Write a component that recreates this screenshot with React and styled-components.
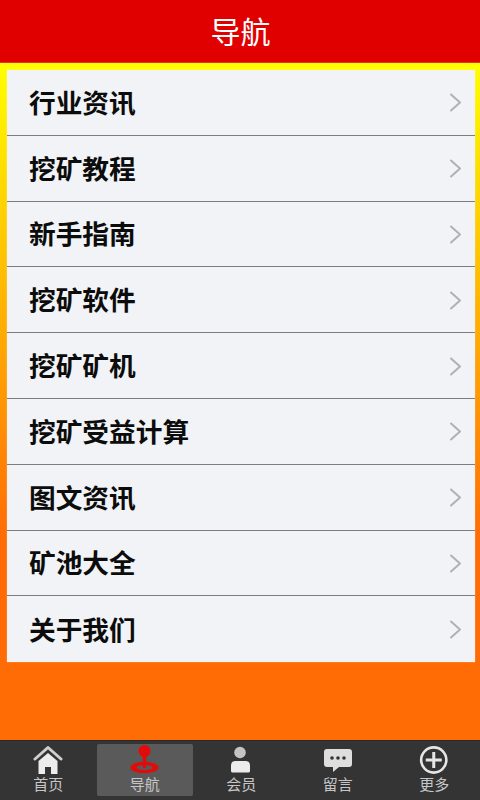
import React from "react";
import styled, { createGlobalStyle } from "styled-components";

const Global = createGlobalStyle`
  html, body { margin: 0; padding: 0; height: 100%; }
  body { font-family: "Liberation Sans", "Noto Sans CJK SC", sans-serif; }
`;
const Page = styled.div`
  width: 480px; height: 800px; display: flex; flex-direction: column; overflow: hidden;
`;
const Header = styled.header`
  height: 63px; flex: none; background: #e00000; color: #fff;
  display: flex; align-items: center; justify-content: center;
  font-size: 30px; border-bottom: 1px solid #e4302a; box-sizing: border-box; padding: 0 0 2px 1px;
`;
const Main = styled.main`
  flex: 1; background: linear-gradient(180deg, #ffff00 0%, #ff6c05 70%, #ff6c05 100%);
  padding: 7px 5px 0 7px;
`;
const List = styled.ul`
  list-style: none; margin: 0; padding: 0; background: #f1f3f6;
  box-shadow: 0 0 1px rgba(255,255,255,.6);
`;
const Row = styled.li`
  height: 65.8px; box-sizing: border-box; display: flex; align-items: center; justify-content: space-between;
  padding: 0 13px 2px 22px; font-size: 26.7px; font-weight: 700; color: #0c0c0c;
  border-bottom: ${p => (p.$last ? "none" : "1px solid #7d7d7d")};
`;
const ChevronSvg = styled.svg`
  width: 13px; height: 19px; flex: none; fill: none; stroke: #aeb1b6; stroke-width: 2;
  stroke-linecap: round; stroke-linejoin: round; margin-top: 3px;
`;
const TabBar = styled.nav`
  height: 60px; flex: none; background: #333433; display: grid; grid-template-columns: repeat(5, 96.5px);
  border-top: 1px solid #2a2a2a; box-sizing: border-box;
`;
const Tab = styled.div`
  display: flex; flex-direction: column; align-items: center; justify-content: flex-end;
  margin: 3px 0 4px; padding-bottom: 1px; border-radius: 2px; color: #c6c6c6; font-size: 15px; line-height: 20px;
  background: ${p => (p.$active ? "#5a5a5a" : "transparent")};
  svg { flex: none; }
`;

const HomeIcon = () => (
  <svg width="30" height="30" viewBox="0 0 30 30">
    <path d="M2 14 L15 2.5 L28 14" fill="none" stroke="#cfcfcf" strokeWidth="3" strokeLinecap="round" strokeLinejoin="round" />
    <path d="M5.5 16 L15 8 L24.5 16 V29 H18 V22 H12 V29 H5.5 Z" fill="#ececec" />
  </svg>
);
const NavIcon = () => (
  <svg width="30" height="30" viewBox="0 0 30 30">
    <ellipse cx="14.5" cy="22.5" rx="14" ry="5.8" fill="#e20a0a" />
    <ellipse cx="14.5" cy="22.5" rx="8" ry="2.6" fill="#5a5a5a" />
    <circle cx="14.5" cy="6" r="6" fill="#e20a0a" />
    <path d="M12.5 9 H16.5 L16 23 H13 Z" fill="#e20a0a" />
  </svg>
);
const UserIcon = () => (
  <svg width="30" height="30" viewBox="0 0 30 30">
    <circle cx="14" cy="7.5" r="5.8" fill="#c4c4c4" />
    <path d="M5 20.5 Q5 16 9.5 16 H19.5 Q24 16 24 20.5 V26 Q24 27.5 22.5 27.5 H6.5 Q5 27.5 5 26 Z" fill="#ececec" />
  </svg>
);
const MsgIcon = () => (
  <svg width="30" height="30" viewBox="0 0 30 30">
    <path d="M4 4 H26 Q29 4 29 7 V19 Q29 22 26 22 H16 L10 27 V22 H4 Q1 22 1 19 V7 Q1 4 4 4 Z" fill="#dedede" />
    <circle cx="9" cy="13" r="1.8" fill="#333" />
    <circle cx="15" cy="13" r="1.8" fill="#333" />
    <circle cx="21" cy="13" r="1.8" fill="#333" />
  </svg>
);
const MoreIcon = () => (
  <svg width="30" height="30" viewBox="0 0 30 30">
    <circle cx="14.75" cy="15" r="12.6" fill="none" stroke="#e6e6e6" strokeWidth="2.6" />
    <path d="M14.75 7 V23 M6.75 15 H22.75" stroke="#e6e6e6" strokeWidth="3" />
  </svg>
);

const items = ["行业资讯", "挖矿教程", "新手指南", "挖矿软件", "挖矿矿机", "挖矿受益计算", "图文资讯", "矿池大全", "关于我们"];
const tabs = [
  { label: "首页", Icon: HomeIcon },
  { label: "导航", Icon: NavIcon, active: true },
  { label: "会员", Icon: UserIcon },
  { label: "留言", Icon: MsgIcon },
  { label: "更多", Icon: MoreIcon },
];

export default function App() {
  return (
    <Page>
      <Global />
      <Header>导航</Header>
      <Main>
        <List>
          {items.map((t, i) => (
            <Row key={t} $last={i === items.length - 1}>
              {t}
              <ChevronSvg viewBox="0 0 13 19"><path d="M2 1.5 L11 9.5 L2 17.5" /></ChevronSvg>
            </Row>
          ))}
        </List>
      </Main>
      <TabBar>
        {tabs.map(({ label, Icon, active }) => (
          <Tab key={label} $active={active}>
            <Icon />
            {label}
          </Tab>
        ))}
      </TabBar>
    </Page>
  );
}
